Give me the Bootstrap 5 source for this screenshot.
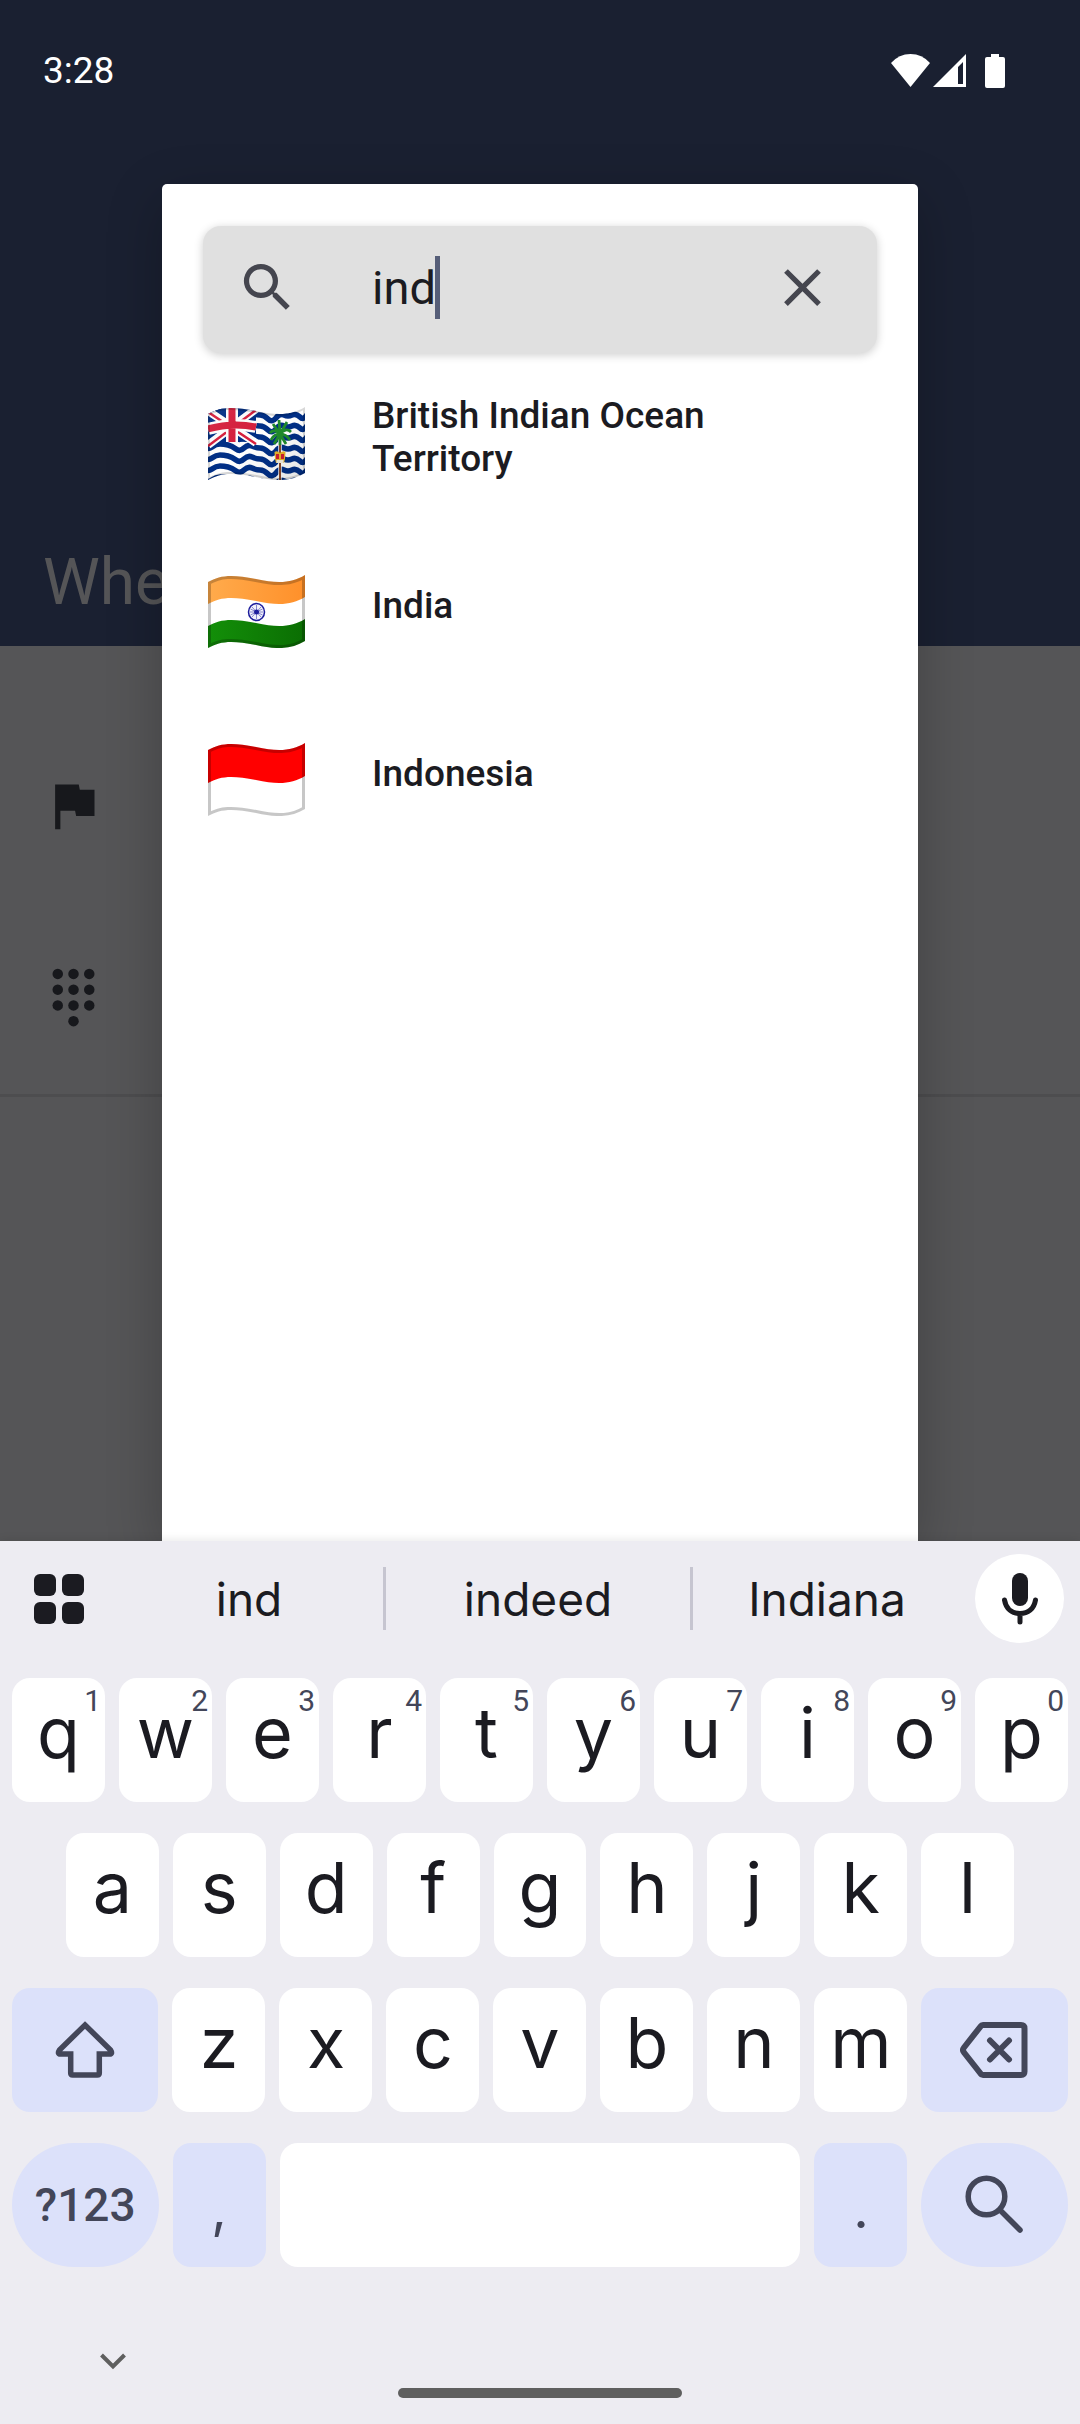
<!DOCTYPE html>
<html lang="en">
<head>
<meta charset="utf-8">
<meta name="viewport" content="width=device-width, initial-scale=1">
<title>Choose a country</title>
<link href="https://cdn.jsdelivr.net/npm/bootstrap@5.3.0/dist/css/bootstrap.min.css" rel="stylesheet">
<style>
  body { font-family: Roboto, "Liberation Sans", sans-serif; background: #555557; color: #1b1b21; }
  svg { display: block; flex: none; }
  .app-head { background: #1a2031; height: 646px; padding: 0 43px; color: #fff; }
  .status { height: 141px; font-size: 37px; line-height: 43px; padding-right: 32px; }
  .page-title { font-size: 64px; line-height: 74px; color: #555557; margin-bottom: 26px; font-weight: 400; }
  .app-row { padding: 0 42px; color: #17181c; }
  .app-rows { padding-top: 128px; gap: 129px; padding-bottom: 65px; border-bottom: 3px solid #4d4d4f; }
  .overlay { inset: 0; padding-top: 184px; }
  .picker { width: 70%; background: #fff; border-radius: 5px 5px 0 0; padding: 42px 41px 0; box-shadow: 0 16px 56px rgba(0,0,0,.24); }
  .search-box { height: 127px; background: #e0e0e0; border-radius: 18px; padding: 0 43px 4px 33px; box-shadow: 0 2px 10px rgba(0,0,0,.2); color: #45464f; }
  .search-text { margin-left: 73px; }
  .search-text input { border: 0; background: none; padding: 0; outline: 0; width: 100%; font-size: 47px; line-height: 63px; color: #1b1b21; }
  .caret { left: 63px; top: 0; width: 5px; height: 63px; background: #565e78; }
  .plain { border: 0; background: none; padding: 0; color: inherit; }
  .country { height: 168px; font-size: 37px; line-height: 43px; font-weight: 500; color: #1b1b21; text-align: left; width: 100%; padding: 0 60px 0 5px; gap: 67px; }
  .country svg { margin-top: 12px; }

  .keyboard { background: #edecf2; font-family: Inter, Roboto, sans-serif; box-shadow: 0 -2px 8px rgba(0,0,0,.08); }
  .suggest { height: 115px; margin-bottom: 22px; font-size: 46px; }
  .suggest .plain { flex: 67 1 0; line-height: 60px; }
  .suggest .mid { flex-grow: 76; }
  .suggest .tools { flex: 0 0 115px; padding-left: 34px; }
  .sep { width: 3px; height: 63px; background: #c6c5d0; }
  .mic-slot { flex: 0 0 119px; padding-left: 14px; }
  .mic { width: 89px; height: 89px; border-radius: 50%; background: #fff; border: 0; padding: 0; }
  .keys { padding: 0 12px; gap: 31px; }
  .key-row { gap: 14px; }
  .inset-row { padding: 0 54px; }
  .key { flex: 1 1 0; height: 124px; min-width: 0; border: 0; border-radius: 18px; background: #fff; color: #1b1b21; font-size: 70px; line-height: 110px; padding: 0 0 14px; position: relative; }
  .key-alt { background: #dce1fa; color: #434659; padding: 0; }
  .key-wide { flex-grow: 1.575; }
  .key-space { flex-grow: 5.6; }
  .key-pill { border-radius: 62px; font-family: Roboto, sans-serif; font-size: 46px; font-weight: 500; line-height: 124px; }
  .key-punct { font-size: 54px; padding-top: 8px; line-height: 116px; }
  .hint { position: absolute; top: 5px; right: 4px; font-size: 30px; line-height: 36px; color: #434659; font-family: Roboto, sans-serif; }
  .nav-zone { padding: 78px 0 26px; }
  .hide-key { width: 60px; height: 32px; margin: 0 0 11px 83px; color: #5f5f5f; }
  .home-bar { width: 284px; height: 10px; border-radius: 5px; background: #5f5f5f; }
</style>
<script src="https://cdn.jsdelivr.net/npm/bootstrap@5.3.0/dist/js/bootstrap.bundle.min.js"></script>
</head>
<body>
<div class="d-flex flex-column min-vh-100">
  <div class="position-relative flex-grow-1 overflow-hidden">
    <header class="app-head d-flex flex-column justify-content-between">
      <div class="status d-flex align-items-center justify-content-between">
        <span>3:28</span>
        <svg width="114" height="34" viewBox="0 0 114 34" fill="#fff" aria-hidden="true">
          <path d="M0 9Q8 0 19.500 0T39 9L19.500 33Z"/>
          <path fill-rule="evenodd" d="M42 33 75 0V33ZM67 13V30H72V8Z"/>
          <path d="M100 0h8v3h4q2 0 2 2v27q0 2-2 2H96q-2 0-2-2V5q0-2 2-2h4z"/>
        </svg>
      </div>
      <h1 class="page-title">Whe</h1>
    </header>
    <div class="app-rows d-flex flex-column">
      <div class="app-row"><svg width="63" height="63" viewBox="0 0 24 24" fill="currentColor"><path d="M14.400 6 14 4H5v17h2v-7h5.600l.4 2h7V6z"/></svg></div>
      <div class="app-row"><svg width="63" height="63" viewBox="0 0 24 24" fill="currentColor"><circle cx="6" cy="3" r="2"/><circle cx="12" cy="3" r="2"/><circle cx="18" cy="3" r="2"/><circle cx="6" cy="9" r="2"/><circle cx="12" cy="9" r="2"/><circle cx="18" cy="9" r="2"/><circle cx="6" cy="15" r="2"/><circle cx="12" cy="15" r="2"/><circle cx="18" cy="15" r="2"/><circle cx="12" cy="21" r="2"/></svg></div>
    </div>

    <div class="overlay position-absolute d-flex justify-content-center">
      <main class="picker" role="dialog" aria-label="Choose a country">
        <div class="search-box d-flex align-items-center">
          <svg width="63" height="63" viewBox="0 0 24 24" fill="currentColor"><path d="M15.500 14h-.79l-.28-.27A6.470 6.470 0 0 0 16 9.500 6.500 6.500 0 1 0 9.500 16c1.610 0 3.090-.59 4.230-1.570l.27.28v.79l5 4.990L20.490 19l-4.990-5zm-6 0C7.010 14 5 11.990 5 9.500S7.010 5 9.500 5 14 7.010 14 9.500 11.990 14 9.500 14z"/></svg>
          <div class="search-text position-relative flex-grow-1">
            <input class="d-block" type="text" value="ind" aria-label="Search country">
            <span class="caret position-absolute"></span>
          </div>
          <button class="plain" type="button" aria-label="Clear"><svg width="63" height="63" viewBox="0 0 24 24" fill="currentColor"><path d="M19 6.410 17.590 5 12 10.590 6.410 5 5 6.410 10.590 12 5 17.590 6.410 19 12 13.410 17.590 19 19 17.590 13.410 12z"/></svg></button>
        </div>

        <button class="plain country d-flex align-items-center" type="button">
          <svg width="97" height="73" viewBox="0 0 97 73">
            <defs>
              <path id="cloth" d="M0 7C12 0 24-1 48 4 70 9 84 8 97 0V66C84 74 70 75 48 70 24 65 12 66 0 73Z"/>
              <clipPath id="cut"><use href="#cloth"/></clipPath>
              <linearGradient id="shade" x1="0" y1="0" x2="1" y2="1"><stop offset="0" stop-color="#fff" stop-opacity=".12"/><stop offset=".5" stop-color="#000" stop-opacity="0"/><stop offset="1" stop-color="#000" stop-opacity=".2"/></linearGradient>
              <path id="swell" d="M-4 3q4 3 8 0t8-3 8 1 8 4 8-1 8-2 8 2 8 4 8-1 8-3 8 0 8 2 8-4"/>
            </defs>
            <g clip-path="url(#cut)">
              <path fill="#fff" d="M0 0h97v73H0z"/>
              <g fill="none" stroke="#012f86" stroke-width="5.500">
                <use href="#swell" y="4"/><use href="#swell" y="15"/><use href="#swell" y="26"/><use href="#swell" y="37"/><use href="#swell" y="48"/><use href="#swell" y="59"/><use href="#swell" y="70"/>
              </g>
              <path fill="#012f86" d="M0 0H48V37Q24 31 0 40Z"/>
              <path stroke="#fff" stroke-width="8" d="M0 4 48 36M0 38 48 2"/>
              <path stroke="#d8203e" stroke-width="2.500" d="M0 5 48 37M0 39 48 3"/>
              <path fill="none" stroke="#fff" stroke-width="12" d="M24 0V35M0 22Q24 15 48 20"/>
              <path fill="none" stroke="#d8203e" stroke-width="7" d="M24 0V35M0 22Q24 15 48 20"/>
              <path stroke="#fff" stroke-opacity=".7" stroke-width="4" d="M72 30V73"/>
              <path stroke="#8a4a2a" stroke-width="2" d="M72 34V73"/>
              <path stroke="#1f8a2c" stroke-width="2.800" fill="none" d="M72 27 71 13M72 27 79 15M72 27 65 17M72 27Q78 20 83 25M72 27Q66 21 62 26M72 27Q78 27 82 33M72 27Q66 27 63 33M72 27 66 37M72 27 78 37M72 27V38"/>
              <path fill="#e8b52a" d="M66.500 45q2.500-2 5.500 1 3-3 5.500-1l-.5 7-1 4h-8l-1-4z"/><path fill="#d01f2f" d="M68 47h3v5h-3zM73 47h3v5h-3z"/><path fill="#f4eedd" d="M68.500 53h7v3h-7z"/>
              <use href="#cloth" fill="url(#shade)" opacity=".6"/>
              <use href="#cloth" fill="none" stroke="#000" stroke-opacity=".15" stroke-width="4"/>
            </g>
          </svg>
          <span>British Indian Ocean Territory</span>
        </button>
        <button class="plain country d-flex align-items-center" type="button">
          <svg width="97" height="73" viewBox="0 0 97 73">
            <defs>
              <linearGradient id="saffron" x1="0" x2="1"><stop offset="0" stop-color="#ffab4c"/><stop offset="1" stop-color="#ff902a"/></linearGradient>
              <linearGradient id="green" x1="0" x2="1"><stop offset="0" stop-color="#138f09"/><stop offset="1" stop-color="#0b6e03"/></linearGradient>
            </defs>
            <g clip-path="url(#cut)">
              <path fill="#fff" d="M0 0h97v73H0z"/>
              <path fill="url(#saffron)" d="M0-20H97V22C84 30 70 31 48 26 24 21 12 22 0 29Z"/>
              <path fill="url(#green)" d="M0 51C12 44 24 43 48 48 70 53 84 52 97 44V80H0Z"/>
              <ellipse cx="48.500" cy="37" rx="8" ry="8.500" fill="#f1f1fb" stroke="#1d1d9c" stroke-width="1.500"/>
              <path stroke="#1d1d9c" stroke-width=".5" d="M42 37H55M48.500 30V44M44 32 53 42M53 32 44 42M42.500 34 54.500 40M42.500 40 54.500 34"/><circle cx="48.500" cy="37" r="2.500" fill="#1d1d9c"/>
              <use href="#cloth" fill="none" stroke="#000" stroke-opacity=".22" stroke-width="6"/>
            </g>
          </svg>
          <span>India</span>
        </button>
        <button class="plain country d-flex align-items-center" type="button">
          <svg width="97" height="73" viewBox="0 0 97 73">
            <g clip-path="url(#cut)">
              <path fill="#fff" d="M0 0h97v73H0z"/>
              <path fill="#f00" d="M0-20H97V33C84 41 70 42 48 37 24 32 12 33 0 40Z"/>
              <use href="#cloth" fill="none" stroke="#000" stroke-opacity=".22" stroke-width="6"/>
            </g>
          </svg>
          <span>Indonesia</span>
        </button>
      </main>
    </div>
  </div>

  <section class="keyboard position-relative" aria-label="Keyboard">
    <div class="suggest d-flex align-items-center">
      <button class="plain tools" type="button" aria-label="Tools"><svg width="50" height="50" viewBox="0 0 50 50" fill="#1b1b21"><rect width="22" height="22" rx="6"/><rect x="28" width="22" height="22" rx="6"/><rect y="28" width="22" height="22" rx="6"/><rect x="28" y="28" width="22" height="22" rx="6"/></svg></button>
      <button class="plain" type="button">ind</button>
      <span class="sep"></span>
      <button class="plain mid" type="button">indeed</button>
      <span class="sep"></span>
      <button class="plain" type="button">Indiana</button>
      <div class="mic-slot"><button class="mic d-flex align-items-center justify-content-center" type="button" aria-label="Voice input"><svg width="38" height="52" viewBox="0 0 38 52"><rect x="11" y="0" width="16" height="33" rx="8" fill="#1b1b21"/><path fill="none" stroke="#1b1b21" stroke-width="5" stroke-linecap="round" d="M3.500 27C5 36 11 40.500 19 40.500S33 36 34.500 27M19 41V49"/></svg></button></div>
    </div>

    <div class="keys d-flex flex-column">
      <div class="key-row d-flex">
        <button class="key" type="button">q<span class="hint">1</span></button>
        <button class="key" type="button">w<span class="hint">2</span></button>
        <button class="key" type="button">e<span class="hint">3</span></button>
        <button class="key" type="button">r<span class="hint">4</span></button>
        <button class="key" type="button">t<span class="hint">5</span></button>
        <button class="key" type="button">y<span class="hint">6</span></button>
        <button class="key" type="button">u<span class="hint">7</span></button>
        <button class="key" type="button">i<span class="hint">8</span></button>
        <button class="key" type="button">o<span class="hint">9</span></button>
        <button class="key" type="button">p<span class="hint">0</span></button>
      </div>
      <div class="key-row inset-row d-flex">
        <button class="key" type="button">a</button>
        <button class="key" type="button">s</button>
        <button class="key" type="button">d</button>
        <button class="key" type="button">f</button>
        <button class="key" type="button">g</button>
        <button class="key" type="button">h</button>
        <button class="key" type="button">j</button>
        <button class="key" type="button">k</button>
        <button class="key" type="button">l</button>
      </div>
      <div class="key-row d-flex">
        <button class="key key-alt key-wide d-flex align-items-center justify-content-center" type="button" aria-label="Shift"><svg width="64" height="64" viewBox="0 0 64 64" fill="none" stroke="currentColor" stroke-width="5.500"><path d="M32 7 57.500 32Q60 36 56.500 36H46.300V55Q46.300 57 44.300 57H19.700Q17.700 57 17.700 55V36H7.500Q4 36 6.500 32Z"/></svg></button>
        <button class="key" type="button">z</button>
        <button class="key" type="button">x</button>
        <button class="key" type="button">c</button>
        <button class="key" type="button">v</button>
        <button class="key" type="button">b</button>
        <button class="key" type="button">n</button>
        <button class="key" type="button">m</button>
        <button class="key key-alt key-wide d-flex align-items-center justify-content-center" type="button" aria-label="Delete"><svg width="72" height="64" viewBox="0 0 72 64" fill="none" stroke="currentColor" stroke-width="6" stroke-linecap="round"><path d="M24 7H62Q65.500 7 65.500 10.500V53.500Q65.500 57 62 57H24Q22.500 57 21.500 55.500L5 34.500Q3 32 5 29.500L21.500 8.500Q22.500 7 24 7ZM31 22.500 50 41.500M50 22.500 31 41.500"/></svg></button>
      </div>
      <div class="key-row d-flex">
        <button class="key key-alt key-wide key-pill" type="button">?123</button>
        <button class="key key-alt key-punct" type="button">,</button>
        <button class="key key-space" type="button" aria-label="Space"></button>
        <button class="key key-alt key-punct" type="button">.</button>
        <button class="key key-alt key-wide key-pill d-flex align-items-center justify-content-center" type="button" aria-label="Search"><svg width="64" height="64" viewBox="0 0 64 64" fill="none" stroke="currentColor" stroke-width="5.500" stroke-linecap="round"><circle cx="23.500" cy="23.500" r="18.300"/><path d="M37 37 57 57"/></svg></button>
      </div>
    </div>

    <div class="nav-zone">
      <button class="plain hide-key d-flex align-items-center justify-content-center" type="button" aria-label="Hide keyboard"><svg width="28" height="18" viewBox="0 0 28 18" fill="none" stroke="currentColor" stroke-width="4"><path d="M2.500 3 14 14.500 25.500 3"/></svg></button>
      <div class="home-bar mx-auto"></div>
    </div>
  </section>
</div>
</body>
</html>
